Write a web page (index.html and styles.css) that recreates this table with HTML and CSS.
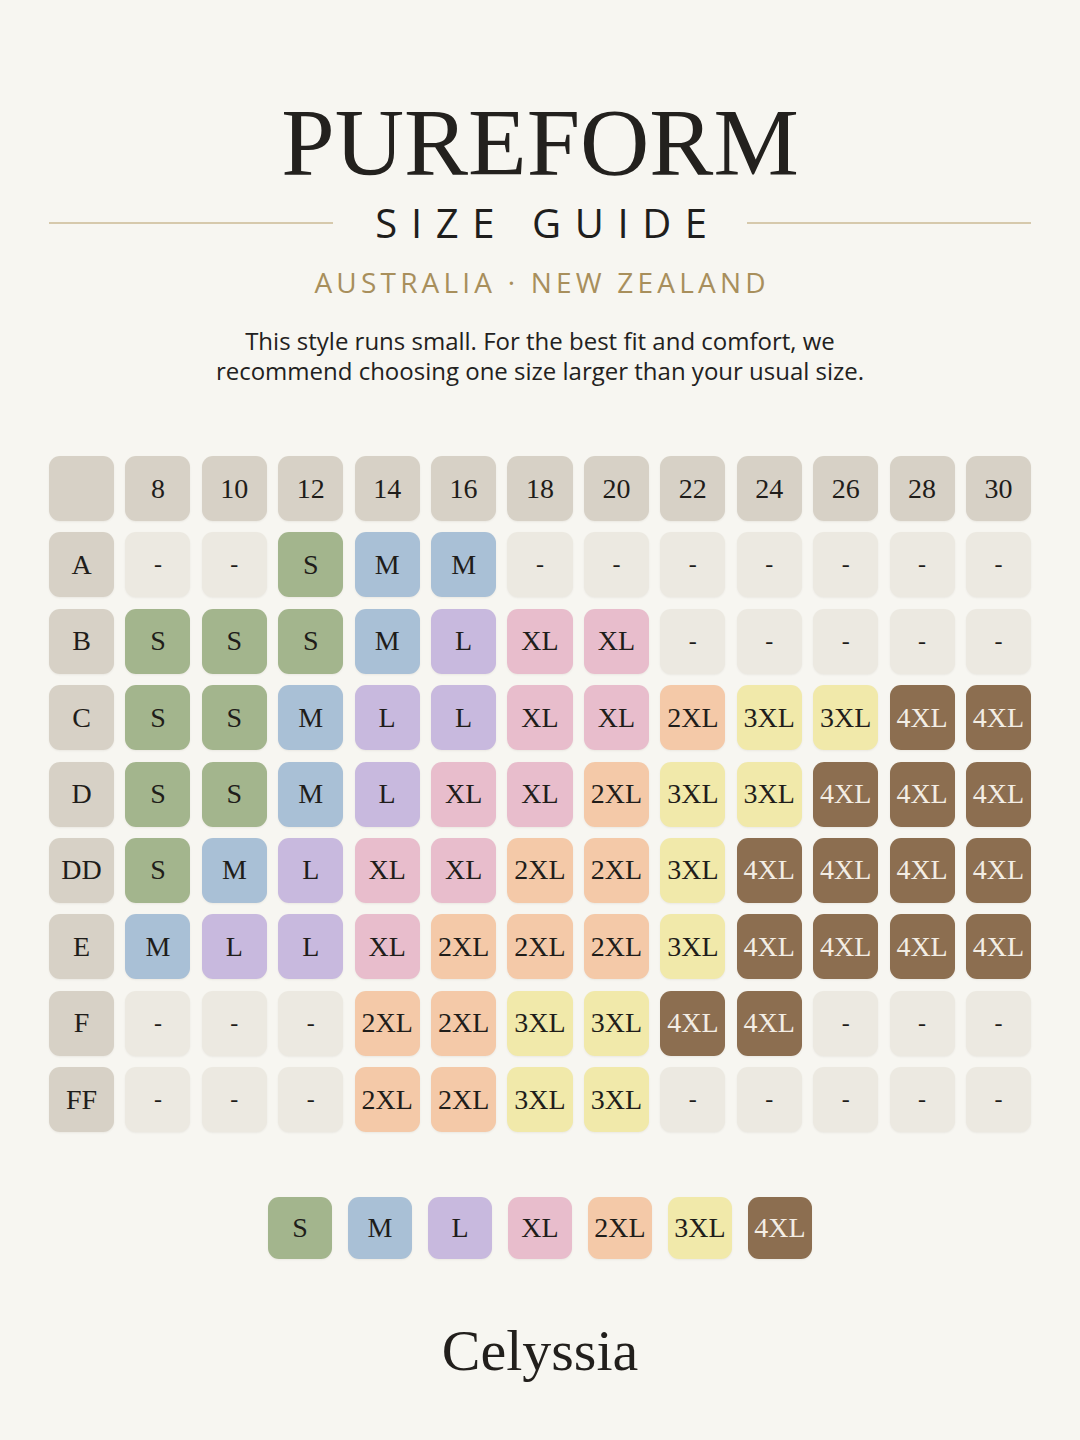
FILE: index.html
```html
<!DOCTYPE html>
<html>
<head>
<meta charset="utf-8">
<link rel="stylesheet" href="styles.css">
</head>
<body>
<main class="page">
  <h1 class="brand-title">PUREFORM</h1>
  <div class="guide-row">
    <span class="rule"></span>
    <span class="guide-text">SIZE GUIDE</span>
    <span class="rule"></span>
  </div>
  <p class="region">AUSTRALIA · NEW ZEALAND</p>
  <p class="note">This style runs small. For the best fit and comfort, we<br>recommend choosing one size larger than your usual size.</p>

  <div class="grid">
    <div class="cell head"></div>
    <div class="cell head">8</div><div class="cell head">10</div><div class="cell head">12</div><div class="cell head">14</div><div class="cell head">16</div><div class="cell head">18</div><div class="cell head">20</div><div class="cell head">22</div><div class="cell head">24</div><div class="cell head">26</div><div class="cell head">28</div><div class="cell head">30</div>

    <div class="cell head">A</div>
    <div class="cell empty">-</div><div class="cell empty">-</div><div class="cell s">S</div><div class="cell m">M</div><div class="cell m">M</div><div class="cell empty">-</div><div class="cell empty">-</div><div class="cell empty">-</div><div class="cell empty">-</div><div class="cell empty">-</div><div class="cell empty">-</div><div class="cell empty">-</div>

    <div class="cell head">B</div>
    <div class="cell s">S</div><div class="cell s">S</div><div class="cell s">S</div><div class="cell m">M</div><div class="cell l">L</div><div class="cell xl">XL</div><div class="cell xl">XL</div><div class="cell empty">-</div><div class="cell empty">-</div><div class="cell empty">-</div><div class="cell empty">-</div><div class="cell empty">-</div>

    <div class="cell head">C</div>
    <div class="cell s">S</div><div class="cell s">S</div><div class="cell m">M</div><div class="cell l">L</div><div class="cell l">L</div><div class="cell xl">XL</div><div class="cell xl">XL</div><div class="cell x2">2XL</div><div class="cell x3">3XL</div><div class="cell x3">3XL</div><div class="cell x4">4XL</div><div class="cell x4">4XL</div>

    <div class="cell head">D</div>
    <div class="cell s">S</div><div class="cell s">S</div><div class="cell m">M</div><div class="cell l">L</div><div class="cell xl">XL</div><div class="cell xl">XL</div><div class="cell x2">2XL</div><div class="cell x3">3XL</div><div class="cell x3">3XL</div><div class="cell x4">4XL</div><div class="cell x4">4XL</div><div class="cell x4">4XL</div>

    <div class="cell head">DD</div>
    <div class="cell s">S</div><div class="cell m">M</div><div class="cell l">L</div><div class="cell xl">XL</div><div class="cell xl">XL</div><div class="cell x2">2XL</div><div class="cell x2">2XL</div><div class="cell x3">3XL</div><div class="cell x4">4XL</div><div class="cell x4">4XL</div><div class="cell x4">4XL</div><div class="cell x4">4XL</div>

    <div class="cell head">E</div>
    <div class="cell m">M</div><div class="cell l">L</div><div class="cell l">L</div><div class="cell xl">XL</div><div class="cell x2">2XL</div><div class="cell x2">2XL</div><div class="cell x2">2XL</div><div class="cell x3">3XL</div><div class="cell x4">4XL</div><div class="cell x4">4XL</div><div class="cell x4">4XL</div><div class="cell x4">4XL</div>

    <div class="cell head">F</div>
    <div class="cell empty">-</div><div class="cell empty">-</div><div class="cell empty">-</div><div class="cell x2">2XL</div><div class="cell x2">2XL</div><div class="cell x3">3XL</div><div class="cell x3">3XL</div><div class="cell x4">4XL</div><div class="cell x4">4XL</div><div class="cell empty">-</div><div class="cell empty">-</div><div class="cell empty">-</div>

    <div class="cell head">FF</div>
    <div class="cell empty">-</div><div class="cell empty">-</div><div class="cell empty">-</div><div class="cell x2">2XL</div><div class="cell x2">2XL</div><div class="cell x3">3XL</div><div class="cell x3">3XL</div><div class="cell empty">-</div><div class="cell empty">-</div><div class="cell empty">-</div><div class="cell empty">-</div><div class="cell empty">-</div>
  </div>

  <div class="legend">
    <div class="cell s">S</div>
    <div class="cell m">M</div>
    <div class="cell l">L</div>
    <div class="cell xl">XL</div>
    <div class="cell x2">2XL</div>
    <div class="cell x3">3XL</div>
    <div class="cell x4">4XL</div>
  </div>

  <p class="logo">Celyssia</p>
</main>
</body>
</html>
```

FILE: styles.css
```css
html, body {
  margin: 0;
  padding: 0;
  background: #f7f6f1;
}

.page {
  width: 1080px;
  height: 1440px;
  box-sizing: border-box;
  padding: 0 49px;
  display: flex;
  flex-direction: column;
  align-items: center;
  color: #1f1d1a;
}

.brand-title {
  margin: 95px 0 0;
  font-family: "Liberation Serif", serif;
  font-weight: 400;
  font-size: 96px;
  line-height: 1;
  letter-spacing: 0;
  color: #23211e;
}

.guide-row {
  width: 100%;
  display: flex;
  align-items: center;
  margin-top: 12px;
}

.rule {
  flex: 1;
  height: 2px;
  background: #d6c9ac;
}

.guide-text {
  font-family: "Open Sans", sans-serif;
  font-size: 40px;
  line-height: 1;
  letter-spacing: 0.34em;
  padding-left: 42px;
  margin-right: 26px;
  color: #1f1e1c;
}

.region {
  margin: 25px 0 0;
  font-family: "Open Sans", sans-serif;
  font-size: 28px;
  line-height: 1;
  letter-spacing: 0.15em;
  padding-left: 0.15em;
  color: #a88f5c;
}

.note {
  margin: 30px 0 0;
  font-family: "Open Sans", sans-serif;
  font-size: 24px;
  line-height: 30px;
  text-align: center;
  color: #222120;
}

.grid {
  margin-top: 70px;
  width: 982px;
  display: grid;
  grid-template-columns: repeat(13, 1fr);
  grid-auto-rows: 65px;
  gap: 11.4px;
}

.cell {
  border-radius: 11px;
  display: flex;
  align-items: center;
  justify-content: center;
  font-family: "Liberation Serif", serif;
  font-size: 28px;
  color: #1f1d1a;
  box-shadow: 0 1px 2px rgba(90, 80, 60, 0.08);
}

.head { background: #d7d1c6; }
.empty { background: #ece9e1; font-size: 24px; }
.s { background: #a3b58d; }
.m { background: #a9c0d6; }
.l { background: #c8b9de; }
.xl { background: #e8bdcc; }
.x2 { background: #f4c9a8; }
.x3 { background: #f1e9aa; }
.x4 { background: #8c6e50; color: #f3ede4; }

.legend {
  margin-top: 65px;
  display: flex;
  gap: 16px;
}

.legend .cell {
  width: 64px;
  height: 62px;
}

.logo {
  margin: 63px 0 0;
  font-family: "Liberation Serif", serif;
  font-size: 58px;
  line-height: 1;
  color: #221f1c;
}
```
